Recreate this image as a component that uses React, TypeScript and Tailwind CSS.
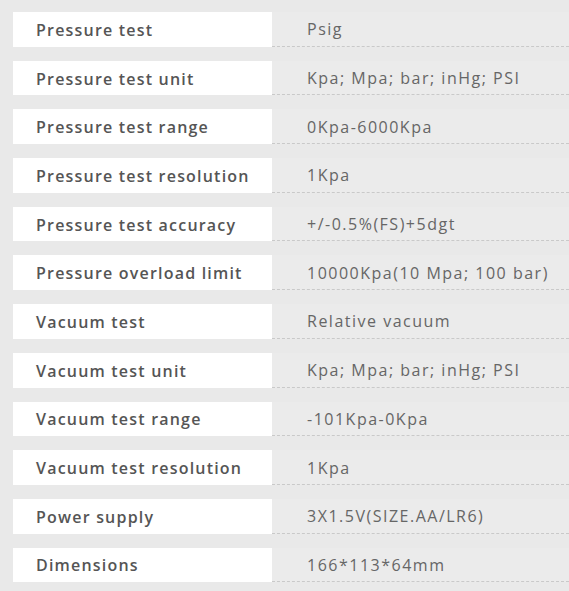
const specs: [string, string][] = [
  ['Pressure test', 'Psig'],
  ['Pressure test unit', 'Kpa; Mpa; bar; inHg; PSI'],
  ['Pressure test range', '0Kpa-6000Kpa'],
  ['Pressure test resolution', '1Kpa'],
  ['Pressure test accuracy', '+/-0.5%(FS)+5dgt'],
  ['Pressure overload limit', '10000Kpa(10 Mpa; 100 bar)'],
  ['Vacuum test', 'Relative vacuum'],
  ['Vacuum test unit', 'Kpa; Mpa; bar; inHg; PSI'],
  ['Vacuum test range', '-101Kpa-0Kpa'],
  ['Vacuum test resolution', '1Kpa'],
  ['Power supply', '3X1.5V(SIZE.AA/LR6)'],
  ['Dimensions', '166*113*64mm'],
]

export default function App() {
  return (
    <div className="w-[569px] h-[591px] bg-[#e9e9e9] pt-[12px] pl-[13px] overflow-hidden font-['Open_Sans',sans-serif]">
      <div className="flex flex-col gap-[14px]">
        {specs.map(([label, value]) => (
          <div key={label} className="flex h-[34.7px]">
            <div className="w-[259px] shrink-0 bg-white flex items-center pl-[23px] pt-[1px] text-[16px] font-semibold text-[#555] tracking-[1.2px] whitespace-nowrap">
              {label}
            </div>
            <div className="flex-1 flex items-center pl-[35px] pt-[1px] border-b border-dashed border-[#c9c9c9] bg-[#ebebeb] text-[16px] text-[#666] tracking-[1.5px] whitespace-nowrap">
              {value}
            </div>
          </div>
        ))}
      </div>
    </div>
  )
}
